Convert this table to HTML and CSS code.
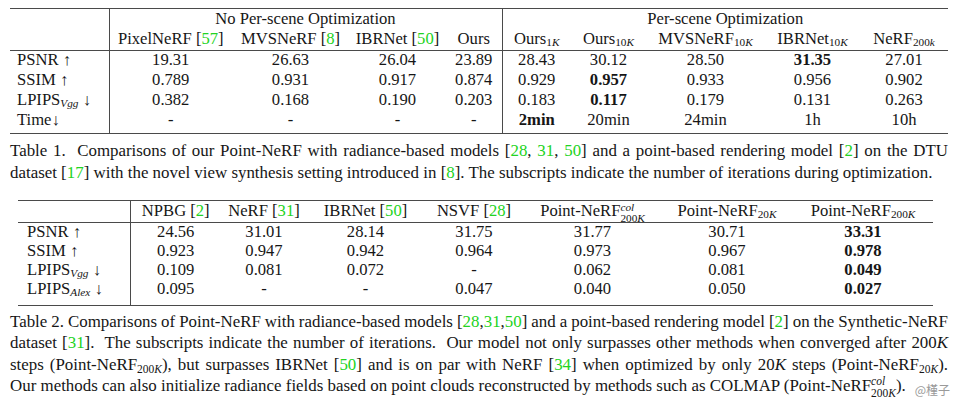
FILE: index.html
```html
<!DOCTYPE html>
<html lang="en">
<head>
<meta charset="utf-8">
<title>Point-NeRF tables</title>
<link rel="stylesheet" href="styles.css">
</head>
<body>
<div class="page">
  <table class="tbl t1">
    <colgroup>
      <col class="c-lab"><col class="c-pix"><col class="c-mvs"><col class="c-ibr"><col class="c-ours">
      <col class="c-o1"><col class="c-o10"><col class="c-mvs10"><col class="c-ibr10"><col class="c-nerf">
    </colgroup>
    <tr class="hr1">
      <td rowspan="2" class="lab vr hb"></td>
      <td colspan="4" class="vr">No Per-scene Optimization</td>
      <td colspan="5">Per-scene Optimization</td>
    </tr>
    <tr class="hr2">
      <td class="hb">PixelNeRF <span class="ct">[<g>57</g>]</span></td>
      <td class="hb">MVSNeRF <span class="ct">[<g>8</g>]</span></td>
      <td class="hb">IBRNet <span class="ct">[<g>50</g>]</span></td>
      <td class="hb vr">Ours</td>
      <td class="hb">Ours<span class="sb">1<i>K</i></span></td>
      <td class="hb">Ours<span class="sb">10<i>K</i></span></td>
      <td class="hb">MVSNeRF<span class="sb">10<i>K</i></span></td>
      <td class="hb">IBRNet<span class="sb">10<i>K</i></span></td>
      <td class="hb">NeRF<span class="sb">200<i>k</i></span></td>
    </tr>
    <tr class="br">
      <td class="lab vr">PSNR ↑</td><td>19.31</td><td>26.63</td><td>26.04</td><td class="vr">23.89</td>
      <td>28.43</td><td>30.12</td><td>28.50</td><td><b>31.35</b></td><td>27.01</td>
    </tr>
    <tr class="br">
      <td class="lab vr">SSIM ↑</td><td>0.789</td><td>0.931</td><td>0.917</td><td class="vr">0.874</td>
      <td>0.929</td><td><b>0.957</b></td><td>0.933</td><td>0.956</td><td>0.902</td>
    </tr>
    <tr class="br">
      <td class="lab vr">LPIPS<span class="sb"><i>Vgg</i></span> ↓</td><td>0.382</td><td>0.168</td><td>0.190</td><td class="vr">0.203</td>
      <td>0.183</td><td><b>0.117</b></td><td>0.179</td><td>0.131</td><td>0.263</td>
    </tr>
    <tr class="br last">
      <td class="lab vr">Time↓</td><td>-</td><td>-</td><td>-</td><td class="vr">-</td>
      <td><b>2min</b></td><td>20min</td><td>24min</td><td>1h</td><td>10h</td>
    </tr>
  </table>

  <div class="cap cap1">
    <p class="ln">Table 1.&nbsp; Comparisons of our Point-NeRF with radiance-based models [<g>28</g>, <g>31</g>, <g>50</g>] and a point-based rendering model [<g>2</g>] on the DTU</p>
    <p class="ln end">dataset [<g>17</g>] with the novel view synthesis setting introduced in [<g>8</g>]. The subscripts indicate the number of iterations during optimization.</p>
  </div>

  <table class="tbl t2">
    <colgroup>
      <col class="d-lab"><col class="d-npbg"><col class="d-nerf"><col class="d-ibr"><col class="d-nsvf">
      <col class="d-pcol"><col class="d-p20"><col class="d-p200">
    </colgroup>
    <tr class="hr">
      <td class="lab vr"></td>
      <td>NPBG <span class="ct">[<g>2</g>]</span></td>
      <td>NeRF <span class="ct">[<g>31</g>]</span></td>
      <td>IBRNet <span class="ct">[<g>50</g>]</span></td>
      <td>NSVF <span class="ct">[<g>28</g>]</span></td>
      <td>Point-NeRF<span class="ss"><span class="sp"><i>col</i></span><span class="sd">200<i>K</i></span></span></td>
      <td>Point-NeRF<span class="sb">20<i>K</i></span></td>
      <td>Point-NeRF<span class="sb">200<i>K</i></span></td>
    </tr>
    <tr class="br">
      <td class="lab vr">PSNR ↑</td><td>24.56</td><td>31.01</td><td>28.14</td><td>31.75</td><td>31.77</td><td>30.71</td><td><b>33.31</b></td>
    </tr>
    <tr class="br">
      <td class="lab vr">SSIM ↑</td><td>0.923</td><td>0.947</td><td>0.942</td><td>0.964</td><td>0.973</td><td>0.967</td><td><b>0.978</b></td>
    </tr>
    <tr class="br">
      <td class="lab vr">LPIPS<span class="sb"><i>Vgg</i></span> ↓</td><td>0.109</td><td>0.081</td><td>0.072</td><td>-</td><td>0.062</td><td>0.081</td><td><b>0.049</b></td>
    </tr>
    <tr class="br last">
      <td class="lab vr">LPIPS<span class="sb"><i>Alex</i></span> ↓</td><td>0.095</td><td>-</td><td>-</td><td>0.047</td><td>0.040</td><td>0.050</td><td><b>0.027</b></td>
    </tr>
  </table>

  <div class="cap cap2">
    <p class="ln tight">Table 2. Comparisons of Point-NeRF with radiance-based models [<g>28</g>,<g>31</g>,<g>50</g>] and a point-based rendering model [<g>2</g>] on the Synthetic-NeRF</p>
    <p class="ln tight">dataset [<g>31</g>].&nbsp; The subscripts indicate the number of iterations.&nbsp; Our model not only surpasses other methods when converged after 200<i>K</i></p>
    <p class="ln tight">steps (Point-NeRF<span class="sb">200<i>K</i></span>), but surpasses IBRNet [<g>50</g>] and is on par with NeRF [<g>34</g>] when optimized by only 20<i>K</i> steps (Point-NeRF<span class="sb">20<i>K</i></span>).</p>
    <p class="ln end">Our methods can also initialize radiance fields based on point clouds reconstructed by methods such as COLMAP (Point-NeRF<span class="ss"><span class="sp"><i>col</i></span><span class="sd">200<i>K</i></span></span>).</p>
  </div>

  <div class="wm">@槿子</div>
</div>
</body>
</html>
```
FILE: styles.css
```css
* { box-sizing: border-box; }
html, body { margin: 0; padding: 0; background: #fff; }
body {
  font-family: "Liberation Serif", "Times New Roman", "Noto Sans CJK SC", serif;
  color: #161616;
}
.page {
  position: relative;
  width: 958px;
  height: 401px;
  padding-top: 8px;
  overflow: hidden;
}
g { color: #22d322; font-style: normal; }
i { font-style: italic; }
b { font-weight: bold; }

.tbl {
  border-collapse: collapse;
  table-layout: fixed;
  font-size: 16.6px;
  line-height: 1;
  border-top: 1px solid #4a4a4a;
  border-bottom: 1px solid #4a4a4a;
}
.tbl td {
  padding: 0;
  text-align: center;
  white-space: nowrap;
  vertical-align: middle;
}
.tbl td.lab { text-align: left; }
.tbl td.vr { border-right: 1px solid #4a4a4a; }
.tbl td.hb, .t2 .hr td { border-bottom: 1px solid #4a4a4a; }

.sb {
  font-size: 0.68em;
  vertical-align: -0.22em;
  line-height: 0;
}
.ss {
  display: inline-flex;
  flex-direction: column;
  font-size: 0.68em;
  line-height: 1;
  vertical-align: 0.5em;
  margin: -9px 0;
  text-align: left;
}

/* Table 1 */
.t1 { margin-left: 10px; width: 938px; }
.t1 .c-lab { width: 99px; }
.t1 .c-pix { width: 123px; }
.t1 .c-mvs { width: 117px; }
.t1 .c-ibr { width: 97px; }
.t1 .c-ours { width: 56px; }
.t1 .c-o1 { width: 69px; }
.t1 .c-o10 { width: 75px; }
.t1 .c-mvs10 { width: 119px; }
.t1 .c-ibr10 { width: 95px; }
.t1 .c-nerf { width: 88px; }
.t1 td.lab { padding-left: 7px; }
.t1 .hr1 { height: 21px; }
.t1 .hr2 { height: 21px; }
.t1 .br { height: 20px; }
.t1 .br.last { height: 23px; }
.t1 .br.last td { padding-bottom: 3px; }

/* Captions */
.cap {
  margin-left: 10px;
  width: 938px;
  font-size: 16.9px;
}
.cap .ln {
  margin: 0;
  text-align: justify;
  text-align-last: justify;
}
.cap .ln.tight { word-spacing: -1.4px; }
.cap .ln.end { text-align-last: left; }
.cap1 { margin-top: 6px; line-height: 22px; }
.cap2 {
  margin-top: 5px;
  line-height: 21.3px;
}

/* Table 2 */
.t2 { margin-left: 18px; margin-top: 16px; width: 915px; }
.t2 .d-lab { width: 112px; }
.t2 .d-npbg { width: 91px; }
.t2 .d-nerf { width: 86px; }
.t2 .d-ibr { width: 117px; }
.t2 .d-nsvf { width: 100px; }
.t2 .d-pcol { width: 137px; }
.t2 .d-p20 { width: 132px; }
.t2 .d-p200 { width: 140px; }
.t2 td.lab { padding-left: 9px; }
.t2 .hr { height: 22px; }
.t2 .br { height: 19px; }
.t2 .br.last { height: 26px; }
.t2 .br.last td { padding-bottom: 5px; }

.wm {
  position: absolute;
  right: 8px;
  bottom: 3px;
  font-family: "Noto Sans CJK SC", "Noto Sans", sans-serif;
  font-size: 12px;
  line-height: 16px;
  color: #9a9a9a;
  background: rgba(255, 255, 255, 0.45);
}
```
